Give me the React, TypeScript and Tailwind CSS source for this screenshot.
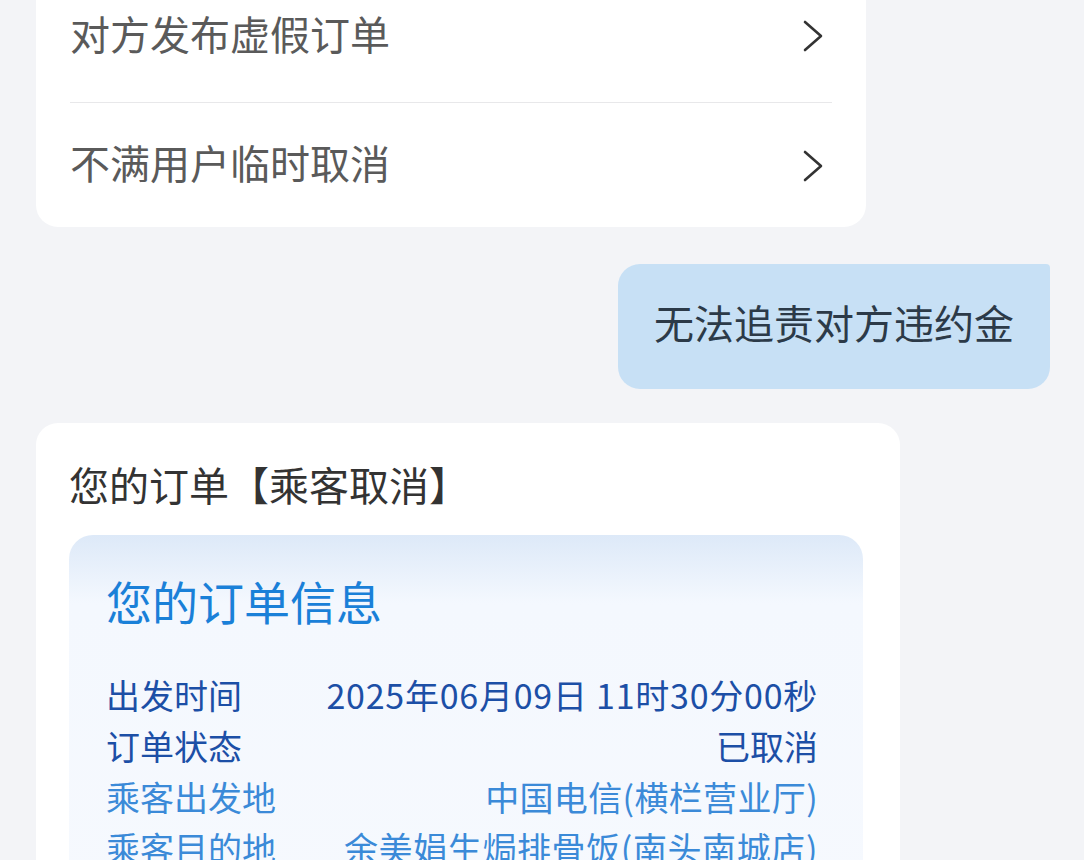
const font = { fontFamily: '"Noto Sans CJK SC", "Noto Sans", sans-serif' }

const reasons = ['对方发布虚假订单', '不满用户临时取消']

const info = [
    { label: '出发时间', value: '2025年06月09日 11时30分00秒', dark: true, track: 'tracking-[0.75px]' },
    { label: '订单状态', value: '已取消', dark: true, track: '' },
    { label: '乘客出发地', value: '中国电信(横栏营业厅)', dark: false, track: 'tracking-[0.35px]' },
    { label: '乘客目的地', value: '余美娟生焗排骨饭(南头南城店)', dark: false, track: 'tracking-[0.6px]' },
]

function Chevron() {
    return (
        <svg width="22" height="34" viewBox="0 0 22 34" fill="none" className="mr-[8px] mt-[7px]">
            <polyline
                points="3,3 19,17 3,31"
                stroke="#333333"
                strokeWidth="2.6"
                strokeLinecap="round"
                strokeLinejoin="round"
            />
        </svg>
    )
}

export default function App() {
    return (
        <div className="h-[860px] overflow-hidden bg-[#f3f4f7]" style={font}>
            {/* reason options card */}
            <div className="ml-[36px] mt-[-37px] w-[830px] rounded-[22px] bg-white px-[34px]">
                {reasons.map((r, i) => (
                    <div
                        key={r}
                        className={`flex items-center justify-between ${i === 0 ? 'h-[140px] border-b border-[#e8e8ea]' : 'h-[124px] pb-[6px]'}`}
                    >
                        <span className="text-[40px] leading-none text-[#5a5a5a]">{r}</span>
                        <Chevron />
                    </div>
                ))}
            </div>

            {/* user bubble */}
            <div className="mt-[37px] flex justify-end pr-[34px]">
                <div className="flex h-[125px] items-center rounded-[22px] rounded-tr-[4px] bg-[#c7e0f5] px-[36px] pb-[10px] text-[40px] leading-none text-[#2c3a48]">
                    无法追责对方违约金
                </div>
            </div>

            {/* order card */}
            <div className="ml-[36px] mt-[34px] w-[864px] rounded-t-[22px] bg-white pl-[33px] pr-[37px] pt-[33px]">
                <div className="text-[40px] leading-[56px] text-[#333333]">您的订单【乘客取消】</div>
                <div className="mt-[23px] rounded-t-[24px] bg-gradient-to-b from-[#dde9f8] via-[#f4f8fe] via-[18%] to-[#f6f9fe] pl-[37px] pr-[45px] pt-[33px] pb-[40px]">
                    <div className="text-[46px] leading-[64px] text-[#1a80d8]">您的订单信息</div>
                    <div className="mt-[37px]">
                        {info.map((row) => (
                            <div
                                key={row.label}
                                className={`flex h-[51px] items-center justify-between text-[34px] leading-none ${row.dark ? 'text-[#1c4fa6]' : 'text-[#3b8ad8]'}`}
                            >
                                <span>{row.label}</span>
                                <span className={row.track}>{row.value}</span>
                            </div>
                        ))}
                    </div>
                </div>
            </div>
        </div>
    )
}
